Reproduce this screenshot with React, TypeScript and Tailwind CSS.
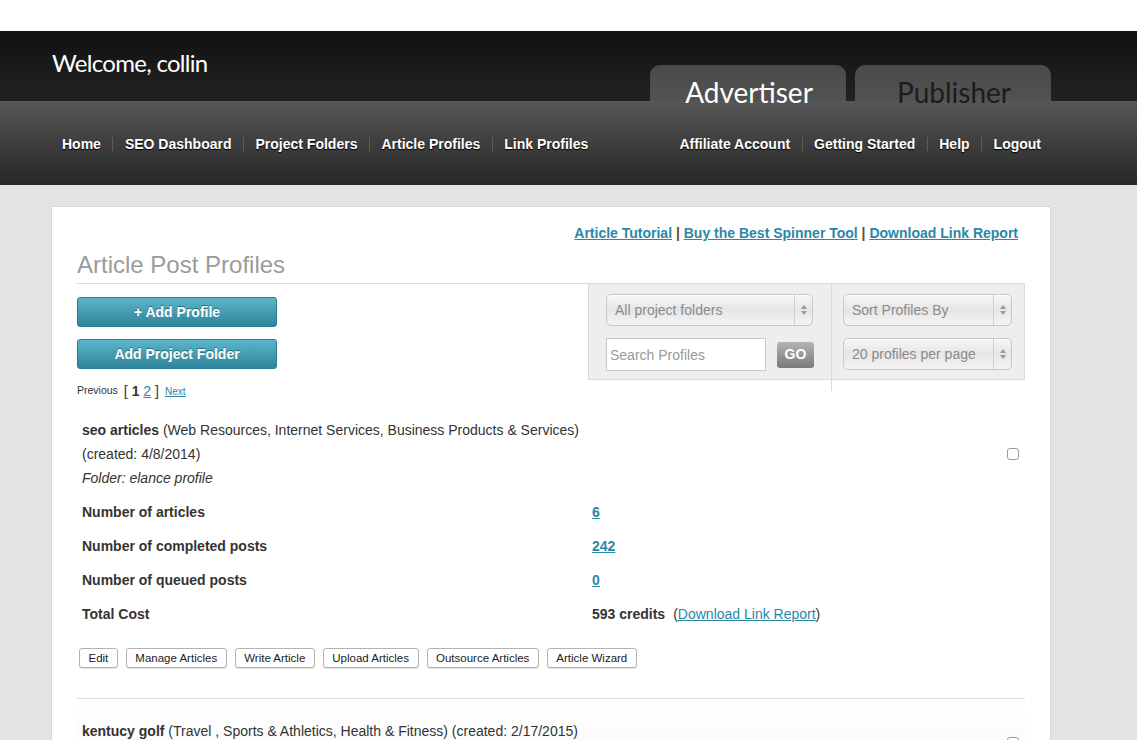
const sans = { fontFamily: '"Liberation Sans", Arial, sans-serif' }

const leftNav = ["Home", "SEO Dashboard", "Project Folders", "Article Profiles", "Link Profiles"]
const rightNav = ["Affiliate Account", "Getting Started", "Help", "Logout"]
const actions = ["Edit", "Manage Articles", "Write Article", "Upload Articles", "Outsource Articles", "Article Wizard"]

const NavGroup = ({ items }: { items: string[] }) => (
    <div className="flex items-center gap-[11.5px]">
        {items.map((item, i) => (
            <div key={item} className="flex items-center gap-[11.5px]">
                {i > 0 && <span className="w-px h-[14px] bg-[#5c5c5c]"></span>}
                <span className="text-white font-bold text-[14px] [text-shadow:0_1px_1px_#000]">{item}</span>
            </div>
        ))}
    </div>
)

const Arrows = () => (
    <svg width="8" height="12" viewBox="0 0 8 12">
        <path d="M4 1 L7 5 L1 5 Z" fill="#999" />
        <path d="M4 11 L7 7 L1 7 Z" fill="#999" />
    </svg>
)

const FakeSelect = ({ label, width }: { label: string; width: string }) => (
    <div className={`${width} h-[32px] flex rounded-[5px] border border-[#c8c8c8] bg-gradient-to-b from-[#f6f6f6] via-[#e6e6e6] to-[#f4f4f4] shadow-[inset_0_1px_0_#fff]`}>
        <div className="flex-1 flex items-center pl-[8px] text-[14px] text-[#8a8a8a]">{label}</div>
        <div className="w-[18px] flex items-center justify-center border-l border-[#cfcfcf]">
            <Arrows />
        </div>
    </div>
)

const Stat = ({ label, children }: { label: string; children: React.ReactNode }) => (
    <div className="flex items-center h-[34px] text-[14px] text-[#333]">
        <div className="w-[510px] font-bold">{label}</div>
        <div>{children}</div>
    </div>
)

const Checkbox = () => (
    <div className="w-[12px] h-[12px] rounded-[3px] border border-[#9a9a9a] bg-white"></div>
)

const App = () => {
    return (
        <div className="min-h-[740px] bg-[#e3e3e3]" style={sans}>
            {/* top strip */}
            <div className="h-[31px] bg-white"></div>
            {/* header */}
            <div className="h-[70px] bg-gradient-to-b from-[#111111] to-[#222222] flex items-end">
                <div className="self-start pl-[52px] pt-[18px] text-white text-[24px] leading-[28px] tracking-[-0.7px]" style={{ fontFamily: 'Lato, "Open Sans", sans-serif' }}>
                    Welcome, collin
                </div>
                <div className="ml-auto mr-[86px] flex gap-[9px]" style={{ fontFamily: 'Lato, "Open Sans", sans-serif' }}>
                    <div className="w-[196px] h-[36px] rounded-t-[10px] bg-gradient-to-b from-[#4a4a4a] to-[#525252] text-center pt-[13px] pl-[2px] text-[28px] leading-[28px] text-white">
                        Advertiser
                    </div>
                    <div className="w-[196px] h-[36px] rounded-t-[10px] bg-gradient-to-b from-[#4a4a4a] to-[#525252] text-center pt-[13px] pl-[2px] text-[28px] leading-[28px] text-[#1c1c1c]">
                        Publisher
                    </div>
                </div>
            </div>
            {/* nav */}
            <div className="h-[84px] bg-gradient-to-b from-[#575757] to-[#272727] flex items-center justify-between pt-[2px] pl-[62px] pr-[96px]">
                <NavGroup items={leftNav} />
                <NavGroup items={rightNav} />
            </div>

            {/* content */}
            <div className="pt-[21px] pl-[51px]">
                <div className="w-[1000px] bg-white border border-[#d6d6d6]">
                    <div className="px-[25px] pt-[17px]">
                        <div className="text-right pr-[7px] text-[14px] leading-[18px] font-bold text-[#2a87a8]">
                            <span className="underline">Article Tutorial</span>
                            <span className="text-[#6b4a2a]"> | </span>
                            <span className="underline">Buy the Best Spinner Tool</span>
                            <span className="text-[#6b4a2a]"> | </span>
                            <span className="underline">Download Link Report</span>
                        </div>
                        <div className="mt-[9px] pb-[4px] border-b border-[#dcdcdc] text-[24px] leading-[28px] text-[#9b9b9b]">
                            Article Post Profiles
                        </div>

                        <div className="flex justify-between">
                            <div className="pt-[13px]">
                                <div className="w-[200px] h-[30px] rounded-[3px] border border-[#2b7b91] bg-gradient-to-b from-[#5cb6ca] to-[#2e849b] flex items-center justify-center text-white font-bold text-[14px] [text-shadow:0_-1px_0_#256d80]">
                                    + Add Profile
                                </div>
                                <div className="mt-[12px] w-[200px] h-[30px] rounded-[3px] border border-[#2b7b91] bg-gradient-to-b from-[#5cb6ca] to-[#2e849b] flex items-center justify-center text-white font-bold text-[14px] [text-shadow:0_-1px_0_#256d80]">
                                    Add Project Folder
                                </div>
                                <div className="mt-[14px] h-[16px] flex items-center text-[#333] whitespace-pre">
                                    <span className="text-[10.5px]">Previous</span>
                                    <span className="ml-[6px] text-[14px]">[ <span className="font-bold">1</span> <span className="text-[#2a87a8] underline">2</span> ]</span>
                                    <span className="ml-[6px] text-[10px] text-[#2a87a8] underline">Next</span>
                                </div>
                            </div>

                            <div className="w-[437px] h-[96px] flex bg-[#eeeeee] border-x border-b border-[#dadada]">
                                <div className="w-[242px] pl-[17px] pt-[10px]">
                                    <FakeSelect label="All project folders" width="w-[207px]" />
                                    <div className="mt-[12px] flex items-center">
                                        <div className="w-[160px] h-[33px] bg-white border border-[#c9c9c9] flex items-center pl-[3px] pt-[2px] text-[14px] text-[#9a9a9a]">
                                            Search Profiles
                                        </div>
                                        <div className="ml-[11px] w-[37px] h-[26px] rounded-[3px] bg-gradient-to-b from-[#b4b4b4] to-[#7a7a7a] flex items-center justify-center text-white font-bold text-[14px]">
                                            GO
                                        </div>
                                    </div>
                                </div>
                                <div className="flex-1 border-l border-[#dadada] -mb-[12px] pl-[11px] pt-[10px]">
                                    <FakeSelect label="Sort Profiles By" width="w-[169px]" />
                                    <div className="mt-[12px]">
                                        <FakeSelect label="20 profiles per page" width="w-[169px]" />
                                    </div>
                                </div>
                            </div>
                        </div>

                        {/* profile 1 */}
                        <div className="mt-[19px] pl-[5px] pr-[6px]">
                            <div className="flex justify-between items-start">
                                <div className="text-[14px] leading-[24px] text-[#333]">
                                    <div><span className="font-bold">seo articles</span> (Web Resources, Internet Services, Business Products &amp; Services)</div>
                                    <div>(created: 4/8/2014)</div>
                                    <div className="italic">Folder: elance profile</div>
                                </div>
                                <div className="mt-[30px]">
                                    <Checkbox />
                                </div>
                            </div>
                            <div className="mt-[5px]">
                                <Stat label="Number of articles">
                                    <span className="font-bold text-[#2a87a8] underline">6</span>
                                </Stat>
                                <Stat label="Number of completed posts">
                                    <span className="font-bold text-[#2a87a8] underline">242</span>
                                </Stat>
                                <Stat label="Number of queued posts">
                                    <span className="font-bold text-[#2a87a8] underline">0</span>
                                </Stat>
                                <Stat label="Total Cost">
                                    <span className="font-bold">593 credits</span>
                                    <span className="ml-[8px]">(<span className="text-[#2a87a8] underline">Download Link Report</span>)</span>
                                </Stat>
                            </div>
                            <div className="mt-[17px] -ml-[3px] flex gap-[8px]">
                                {actions.map(a => (
                                    <div key={a} className="h-[20px] px-[8.5px] pt-[1px] flex items-center rounded-[3px] border border-[#b3b3b3] bg-white text-[11.5px] text-[#222] shadow-[0_1px_0_#e2e2e2]">
                                        {a}
                                    </div>
                                ))}
                            </div>
                        </div>
                        <div className="mt-[30px] border-t border-[#dcdcdc]"></div>

                        {/* profile 2 */}
                        <div className="pt-[20px] pl-[5px] pr-[6px] pb-[40px] bg-gradient-to-b from-white to-[#f7f7f7]">
                            <div className="flex justify-between items-start">
                                <div className="text-[14px] leading-[24px] text-[#333]">
                                    <span className="font-bold">kentucy golf</span> (Travel , Sports &amp; Athletics, Health &amp; Fitness) (created: 2/17/2015)
                                </div>
                                <div className="mt-[18px]">
                                    <Checkbox />
                                </div>
                            </div>
                        </div>
                    </div>
                </div>
            </div>
        </div>
    )
}

export default App
